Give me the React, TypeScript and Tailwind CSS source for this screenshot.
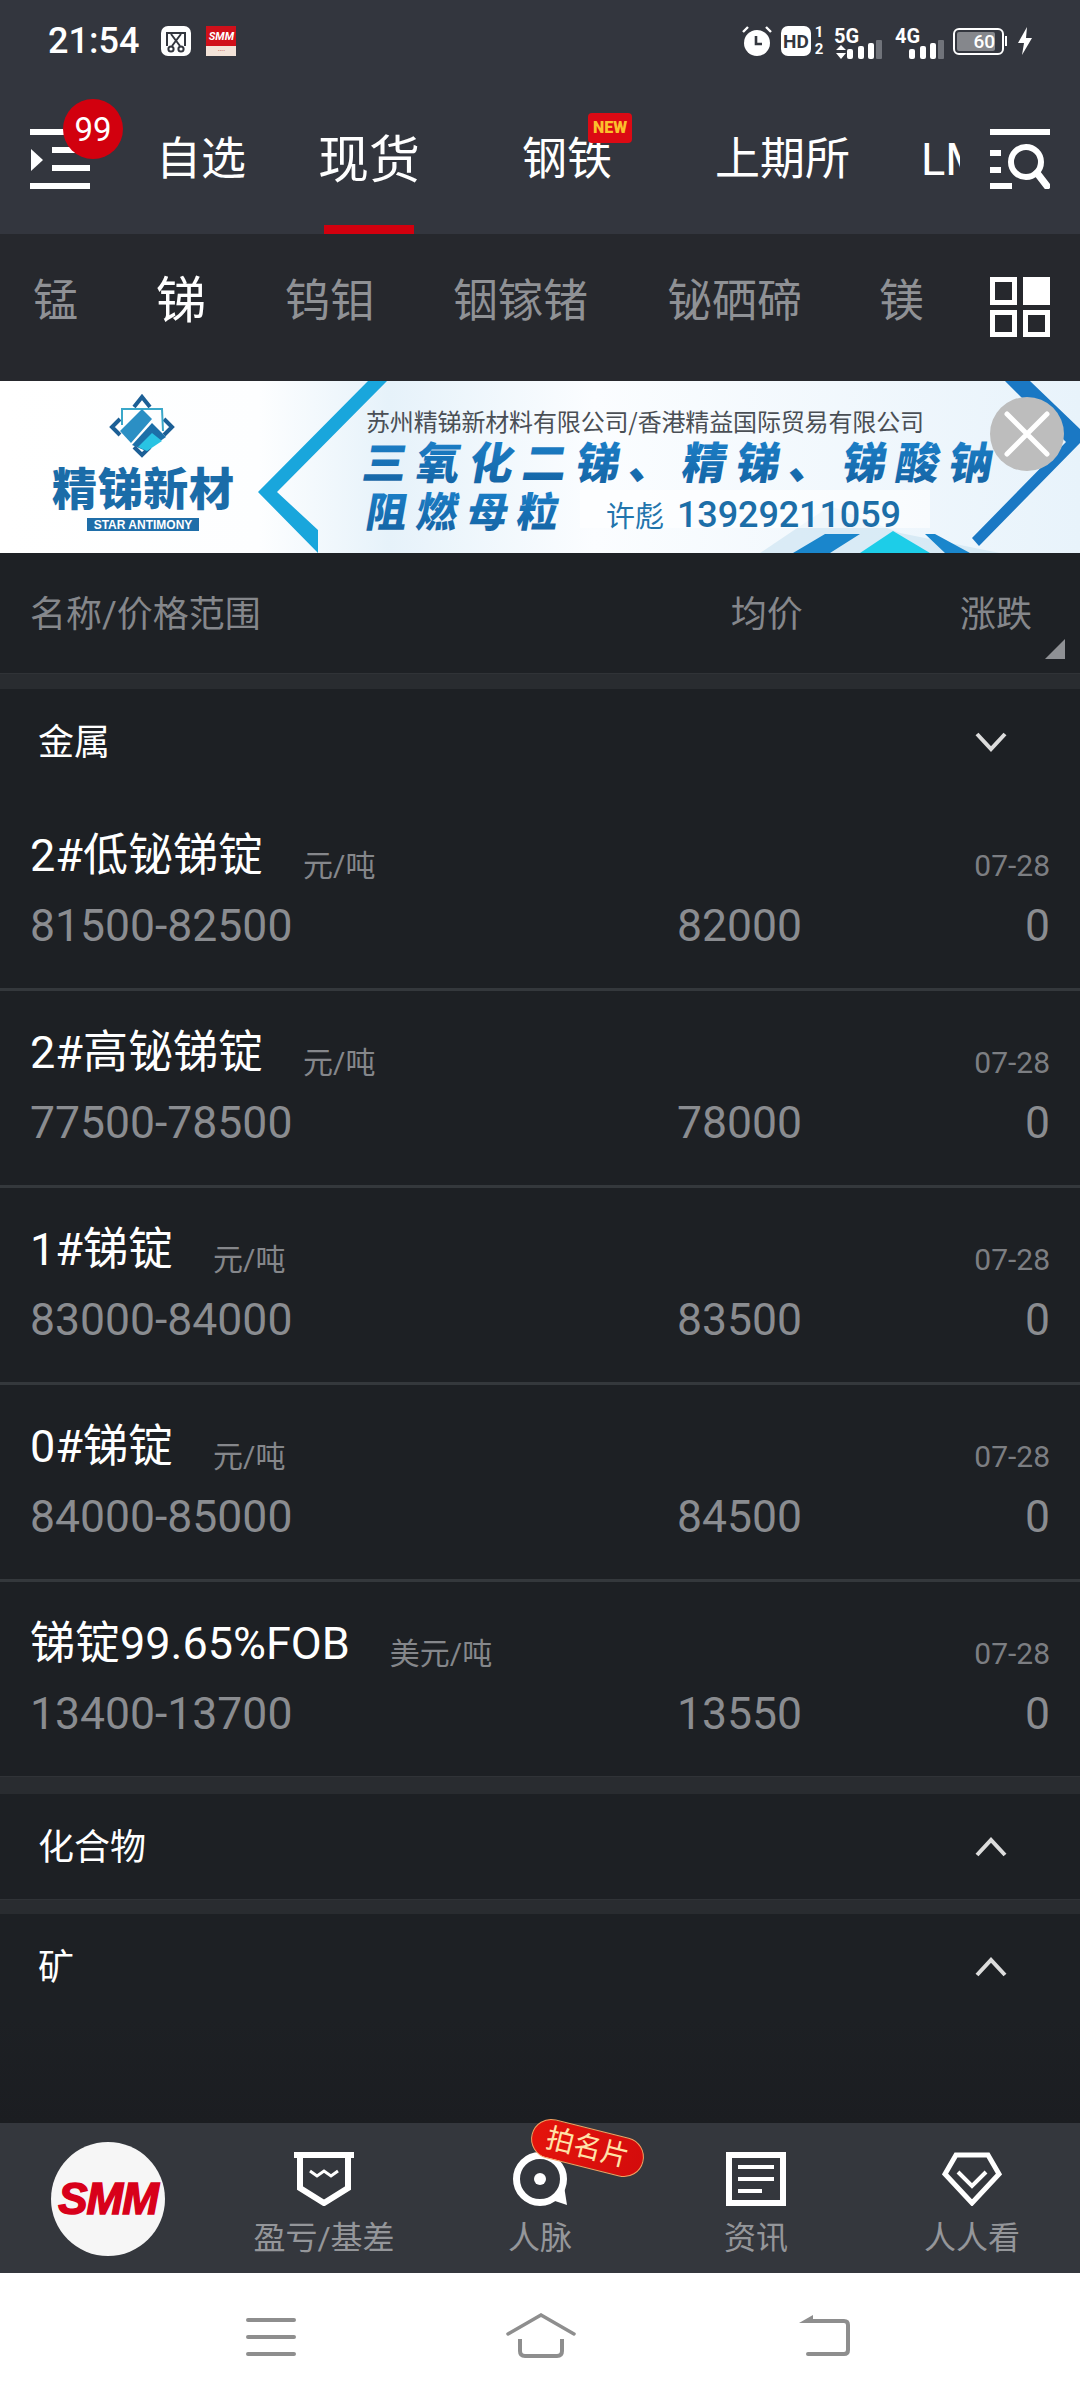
import { ReactNode } from "react";

interface Row {
  name: string;
  unit: string;
  range: string;
  avg: string;
}

const rows: Row[] = [
  { name: "2#低铋锑锭", unit: "元/吨", range: "81500-82500", avg: "82000" },
  { name: "2#高铋锑锭", unit: "元/吨", range: "77500-78500", avg: "78000" },
  { name: "1#锑锭", unit: "元/吨", range: "83000-84000", avg: "83500" },
  { name: "0#锑锭", unit: "元/吨", range: "84000-85000", avg: "84500" },
  { name: "锑锭99.65%FOB", unit: "美元/吨", range: "13400-13700", avg: "13550" },
];

const Signal = ({ label }: { label: string }) => (
  <svg width="50" height="38" viewBox="0 -6 50 38" className="block">
    {label === "5G" ? (
      <>
        <text x="1" y="15" fontSize="20" fontWeight="700" fill="#fff" fontFamily="Roboto">
          {label}
        </text>
        <path d="M3 22 L8 17 L13 22 Z M3 25 L13 25 L8 31 Z" fill="#fff" />
      </>
    ) : (
      <text x="0" y="15" fontSize="20" fontWeight="700" fill="#fff" fontFamily="Roboto">
        {label}
      </text>
    )}
    <rect x="14" y="21" width="6" height="10" rx="2" fill="#fff" />
    <rect x="25" y="18" width="6" height="13" rx="2" fill="#fff" />
    <rect x="35" y="15" width="6" height="16" rx="2" fill="#fff" />
    <rect x="43" y="12" width="6" height="19" rx="1" fill="#70737a" />
  </svg>
);

const StatusBar = () => (
  <div className="flex h-[82px] items-center pl-[48px] pr-[48px]">
    <span className="text-[36px] font-medium leading-none text-white">21:54</span>
    <svg width="30" height="30" viewBox="0 0 30 30" className="ml-[22px]">
      <rect width="30" height="30" rx="7" fill="#fff" />
      <path d="M6 20 V7 H24 V20" fill="none" stroke="#33363e" strokeWidth="2" />
      <path d="M10 8 L19 20 M20 8 L11 20" stroke="#33363e" strokeWidth="2" />
      <circle cx="10" cy="23" r="2.6" fill="none" stroke="#33363e" strokeWidth="2" />
      <circle cx="20" cy="23" r="2.6" fill="none" stroke="#33363e" strokeWidth="2" />
    </svg>
    <div className="ml-[15px] flex h-[30px] w-[30px] flex-col overflow-hidden">
      <div className="flex h-[20px] items-center justify-center bg-[#d0101a] text-[11px] font-bold italic leading-none text-white">
        SMM
      </div>
      <div className="flex h-[10px] items-center justify-center bg-[#f3e3d8] text-[7px] leading-none text-[#b04030]">
        ····
      </div>
    </div>
    <div className="ml-auto flex items-center">
      <svg width="30" height="32" viewBox="0 0 30 32">
        <circle cx="15" cy="18" r="13" fill="#fff" />
        <path d="M14 11 V19 H20" fill="none" stroke="#33363e" strokeWidth="2.6" />
        <path d="M1 7 L6 2 M29 7 L24 2" stroke="#fff" strokeWidth="2.4" />
      </svg>
      <div className="ml-[9px] flex h-[30px] w-[30px] items-center justify-center rounded-[7px] bg-white text-[19px] font-bold leading-none text-[#33363e]">
        HD
      </div>
      <div className="ml-[2px] flex h-[32px] w-[12px] flex-col items-center justify-between text-[15px] font-bold leading-[15px] text-white">
        <span>1</span>
        <span>2</span>
      </div>
      <div className="ml-[8px]">
        <Signal label="5G" />
      </div>
      <div className="ml-[12px]">
        <Signal label="4G" />
      </div>
      <div className="ml-[8px] flex h-[27px] w-[51px] items-center rounded-[6px] border-2 border-white p-[2px]">
        <div className="flex h-full w-[38px] items-center justify-end rounded-[2px] bg-[#85878c] text-[19px] font-medium leading-none text-white">
          60
        </div>
      </div>
      <div className="ml-[1px] h-[10px] w-[2px] bg-white" />
      <svg width="14" height="28" viewBox="0 0 14 28" className="ml-[11px]">
        <path d="M9 0 L0 16 H6 L4 28 L14 11 H8 Z" fill="#fff" />
      </svg>
    </div>
  </div>
);

const MainNav = () => (
  <div className="flex h-[152px] items-start">
    <div className="relative ml-[30px] mt-[47px] h-[60px] w-[60px] shrink-0">
      <svg width="60" height="60" viewBox="0 0 60 60" className="block">
        <rect x="0" y="0" width="60" height="6" fill="#fff" />
        <rect x="22" y="18" width="38" height="6" fill="#fff" />
        <rect x="22" y="36" width="38" height="6" fill="#fff" />
        <rect x="0" y="54" width="60" height="6" fill="#fff" />
        <path d="M1 20 L13 31 L1 42 Z" fill="#fff" />
      </svg>
      <div className="absolute left-[33px] top-[-30px] flex h-[60px] w-[60px] items-center justify-center rounded-full bg-[#d2000e] text-[33px] leading-none text-white">
        99
      </div>
    </div>
    <div className="ml-[66px] flex h-full w-[804px] overflow-hidden text-[45px] leading-none text-white">
      <span className="mt-[55px] shrink-0">自选</span>
      <div className="relative ml-[72px] h-full w-[102px] shrink-0">
        <span className="mt-[53px] block text-[51px] leading-none">现货</span>
        <div className="absolute bottom-0 left-[6px] h-[9px] w-[90px] bg-[#d2000e]" />
      </div>
      <div className="relative ml-[102px] shrink-0">
        <span className="mt-[55px] block">钢铁</span>
        <div className="absolute left-[66px] top-[31px] flex h-[30px] w-[44px] items-center justify-center rounded-[4px] bg-[#dc0a14] text-[16px] font-black leading-none text-[#fbc02d]">
          NEW
        </div>
      </div>
      <span className="ml-[103px] mt-[55px] shrink-0">上期所</span>
      <span className="ml-[71px] mt-[55px] shrink-0">LME</span>
    </div>
    <svg width="60" height="60" viewBox="0 0 60 60" className="mt-[47px] ml-[30px] shrink-0">
      <rect width="60" height="6" fill="#fff" />
      <rect y="21" width="11" height="6" fill="#fff" />
      <rect y="38" width="11" height="6" fill="#fff" />
      <rect y="54" width="22" height="6" fill="#fff" />
      <circle cx="36" cy="33" r="15" fill="none" stroke="#fff" strokeWidth="6" />
      <path d="M47 44 L57 57" stroke="#fff" strokeWidth="7" strokeLinecap="round" />
    </svg>
  </div>
);

const SubNav = () => (
  <div className="flex h-[147px] shrink-0 items-start bg-[#26282d] text-[45px] leading-none text-[#8f9195]">
    <span className="ml-[33px] mt-[45px]">锰</span>
    <span className="ml-[78px] mt-[42px] text-[50px] text-white">锑</span>
    <span className="ml-[79px] mt-[45px]">钨钼</span>
    <span className="ml-[78px] mt-[45px]">铟镓锗</span>
    <span className="ml-[79px] mt-[45px]">铋硒碲</span>
    <span className="ml-[77px] mt-[45px]">镁</span>
    <svg width="60" height="60" viewBox="0 0 60 60" className="ml-auto mr-[30px] mt-[43px]">
      <rect x="2.5" y="2.5" width="22" height="23" fill="none" stroke="#fff" strokeWidth="5" />
      <rect x="33" y="0" width="27" height="28" fill="#fff" />
      <rect x="2.5" y="35.5" width="22" height="22" fill="none" stroke="#fff" strokeWidth="5" />
      <rect x="35.5" y="35.5" width="22" height="22" fill="none" stroke="#fff" strokeWidth="5" />
    </svg>
  </div>
);

const Banner = () => (
  <svg width="1080" height="172" viewBox="0 0 1080 172" className="block shrink-0">
    <defs>
      <linearGradient id="bannerBg" x1="0" x2="1" y1="0" y2="0">
        <stop offset="0" stopColor="#ffffff" />
        <stop offset="0.24" stopColor="#fdfeff" />
        <stop offset="0.36" stopColor="#e6f2fa" />
        <stop offset="0.55" stopColor="#fbfdff" />
        <stop offset="1" stopColor="#e8f3fb" />
      </linearGradient>
      <linearGradient id="bannerText" x1="0" x2="0" y1="0" y2="1">
        <stop offset="0" stopColor="#1d86d0" />
        <stop offset="1" stopColor="#14609f" />
      </linearGradient>
    </defs>
    <rect width="1080" height="172" fill="url(#bannerBg)" />
    <path d="M760 172 L830 125 L900 152 L1000 172 Z" fill="#cfe6f2" opacity="0.7" />
    <path d="M580 109 H930 V147 H580 Z" fill="#ffffff" opacity="0.6" />

    {/* logo */}
    <path d="M134 26 L142 16 L150 26 M134 66 L142 74 L150 66" fill="none" stroke="#1c5f96" strokeWidth="4" />
    <path d="M120 38 L112 46 L120 54 M164 38 L172 46 L164 54" fill="none" stroke="#1c5f96" strokeWidth="4" />
    <path d="M122 44 V28 H162 L163 50" fill="none" stroke="#3aa7c9" strokeWidth="2" />
    <path d="M120 50 L142 28 L152 38 L131 62 Z" fill="#2b8fc4" />
    <path d="M132 64 L152 42 L166 56 L146 70 Z" fill="#1c6fa8" />
    <path d="M138 66 L152 52 L162 60 L147 70 Z" fill="#29c3e3" />
    <text x="52" y="125" fontSize="45" fontWeight="900" fill="#1b6ca8" fontFamily="'Noto Sans CJK SC'" textLength="182">
      精锑新材
    </text>
    <rect x="87" y="137" width="112" height="13" fill="#1f6ea9" />
    <text x="143" y="148" fontSize="12" fontWeight="700" fill="#fff" fontFamily="'Liberation Sans'" textAnchor="middle">
      STAR ANTIMONY
    </text>

    {/* chevrons */}
    <path d="M368 0 H387 L277 111 L318 149 V172 L258 111 Z" fill="#19a6dc" />
    <path d="M1005 0 H1030 L1080 48 V62 L979 165 L972 157 L1066 61 Z" fill="#1a78c4" />
    <path d="M793 172 L825 153 H860 L830 172 Z M925 153 H935 L970 172 H945 Z" fill="#1a86cc" />
    <path d="M860 172 L893 150 L930 172 Z" fill="#1dcde8" />

    <text x="366" y="50" fontSize="24" fill="#4a4f55" fontFamily="'Noto Sans CJK SC'" textLength="558">
      苏州精锑新材料有限公司/香港精益国际贸易有限公司
    </text>
    <g transform="skewX(-10)">
      <text x="378" y="98" fontSize="44" fontWeight="900" fill="url(#bannerText)" fontFamily="'Noto Sans CJK SC'" textLength="630">
        三氧化二锑、精锑、锑酸钠
      </text>
      <text x="390" y="146" fontSize="41" fontWeight="900" fill="url(#bannerText)" fontFamily="'Noto Sans CJK SC'" textLength="192">
        阻燃母粒
      </text>
    </g>
    <text x="606" y="146" fontSize="29" fill="#2275ad" fontFamily="'Noto Sans CJK SC'">
      许彪
    </text>
    <text x="677" y="146" fontSize="36" fontWeight="500" fill="#1c6ea8" fontFamily="Roboto" textLength="224">
      13929211059
    </text>

    {/* close button */}
    <circle cx="1027" cy="53" r="37" fill="#bdbdbd" />
    <path d="M1007 33 L1047 73 M1047 33 L1007 73" stroke="#fff" strokeWidth="5" strokeLinecap="round" />
  </svg>
);

const TableHeader = () => (
  <div className="relative flex h-[120px] shrink-0 items-center bg-[#1e2125] pt-[4px] text-[36px] leading-none text-[#85878b]">
    <span className="ml-[30px]">名称/价格范围</span>
    <span className="ml-[470px]">均价</span>
    <span className="ml-[157px]">涨跌</span>
    <div className="absolute left-[1045px] top-[86px] h-[20px] w-[20px] bg-[#8f9195] [clip-path:polygon(100%_0,100%_100%,0_100%)]" />
  </div>
);

const Bar = ({ h }: { h: string }) => <div className={`${h} shrink-0 border-t border-[#303337] bg-[#292c30]`} />;

const SectionTitle = ({ title, open, children }: { title: string; open?: boolean; children?: ReactNode }) => (
  <div className="flex h-[105px] shrink-0 items-center pl-[38px] pr-[73px] text-[36px] leading-none text-white">
    <span className="mt-[3px]">{title}</span>
    <svg width="32" height="20" viewBox="0 0 32 20" className="ml-auto">
      <path d={open ? "M2 2 L16 17 L30 2" : "M2 18 L16 3 L30 18"} fill="none" stroke="#dcdcdc" strokeWidth="4" />
    </svg>
    {children}
  </div>
);

const DataRow = ({ row, last }: { row: Row; last: boolean }) => (
  <div className={`shrink-0 px-[30px] pt-[36px] ${last ? "h-[194px]" : "h-[197px] border-b-[3px] border-[#34383c]"}`}>
    <div className="flex h-[50px] items-center">
      <span className="text-[45px] leading-none text-white">{row.name}</span>
      <span className="ml-[40px] mt-[22px] text-[30px] leading-none text-[#85878b]">{row.unit}</span>
      <span className="ml-auto mt-[22px] text-[30px] leading-none text-[#7c7e82]">07-28</span>
    </div>
    <div className="relative mt-[20px] flex h-[52px] items-center justify-between text-[44.5px] leading-none text-[#8a8c90]">
      <span>{row.range}</span>
      <span className="absolute right-[248px]">{row.avg}</span>
      <span>0</span>
    </div>
  </div>
);

const BottomNav = () => (
  <div className="relative grid h-[150px] shrink-0 grid-cols-5 bg-[#34373d] text-[32px] leading-none text-[#94969a]">
    <div className="flex items-start justify-center pt-[19px]">
      <div className="flex h-[114px] w-[114px] items-center justify-center overflow-hidden rounded-full bg-[#f6f6f6]">
        <span className="font-['Liberation_Sans'] text-[44px] font-bold italic leading-none tracking-[-1px] text-[#d8001a] [-webkit-text-stroke:1.5px_#d8001a]">
          SMM
        </span>
      </div>
    </div>
    <div className="flex flex-col items-center pt-[29px]">
      <svg width="60" height="54" viewBox="0 0 60 54" className="block">
        <rect width="60" height="6" fill="#fff" />
        <path d="M6 3 V36 L30 51 L54 36 V3" fill="none" stroke="#fff" strokeWidth="6" />
        <path d="M16 19 L23 24 L30 19 L37 24 L44 19" fill="none" stroke="#fff" strokeWidth="3" />
      </svg>
      <span className="mt-[16px]">盈亏/基差</span>
    </div>
    <div className="relative flex flex-col items-center pt-[29px]">
      <svg width="60" height="54" viewBox="0 0 60 54" className="block">
        <circle cx="30" cy="27" r="23.5" fill="none" stroke="#fff" strokeWidth="7" />
        <path d="M42 48 L57 53 L54 34 Z" fill="#fff" />
        <circle cx="30" cy="27" r="6" fill="#fff" />
      </svg>
      <span className="mt-[16px]">人脉</span>
      <div className="absolute left-[98px] top-[5px] flex h-[40px] w-[115px] rotate-[14deg] items-center justify-center rounded-[20px] border border-[#f4a060] bg-gradient-to-r from-[#e4140c] to-[#d40c0c] text-[28px] leading-none text-[#ffe2a8]">
        拍名片
      </div>
    </div>
    <div className="flex flex-col items-center pt-[29px]">
      <svg width="60" height="54" viewBox="0 0 60 54" className="block">
        <rect x="3" y="3" width="54" height="48" fill="none" stroke="#fff" strokeWidth="6" />
        <path d="M12 15 H48 M12 27 H48 M12 39 H36" stroke="#fff" strokeWidth="4" />
      </svg>
      <span className="mt-[16px]">资讯</span>
    </div>
    <div className="flex flex-col items-center pt-[29px]">
      <svg width="60" height="54" viewBox="0 0 60 54" className="block">
        <path d="M14 3 H46 L57 22 L30 51 L3 22 Z" fill="none" stroke="#fff" strokeWidth="5" />
        <path d="M16 20 L30 34 L44 20" fill="none" stroke="#fff" strokeWidth="4" />
      </svg>
      <span className="mt-[16px]">人人看</span>
    </div>
  </div>
);

const SystemNav = () => (
  <div className="flex h-[127px] shrink-0 items-start bg-white">
    <svg width="50" height="40" viewBox="0 0 50 40" className="ml-[246px] mt-[45px]">
      <path d="M2 2 H48 M2 19 H48 M2 36 H48" stroke="#8e8e8e" strokeWidth="4" strokeLinecap="round" />
    </svg>
    <svg width="70" height="46" viewBox="0 0 70 46" className="ml-[210px] mt-[40px]">
      <path d="M2 21 L35 2 L68 21" fill="none" stroke="#8e8e8e" strokeWidth="3.5" strokeLinecap="round" />
      <path d="M14 26 V38 Q14 43 19 43 H51 Q56 43 56 38 V26" fill="none" stroke="#8e8e8e" strokeWidth="4" />
    </svg>
    <svg width="52" height="46" viewBox="0 0 52 46" className="ml-[222px] mt-[41px]">
      <path d="M1 9 L15 1 V9 Z" fill="#8e8e8e" />
      <path d="M12 7 H46 Q50 7 50 11 V36 Q50 40 46 40 H10" fill="none" stroke="#8e8e8e" strokeWidth="4" strokeLinecap="round" />
    </svg>
  </div>
);

export default function App() {
  return (
    <div className="flex h-[2400px] w-[1080px] flex-col overflow-hidden bg-[#1d2024] font-[Roboto,'Noto_Sans_CJK_SC',sans-serif]">
      <div className="h-[234px] shrink-0 bg-[#33363e]">
        <StatusBar />
        <MainNav />
      </div>
      <SubNav />
      <Banner />
      <TableHeader />
      <Bar h="h-[16px]" />
      <SectionTitle title="金属" open />
      {rows.map((row, i) => (
        <DataRow key={row.name} row={row} last={i === rows.length - 1} />
      ))}
      <Bar h="h-[18px]" />
      <SectionTitle title="化合物" />
      <Bar h="h-[15px]" />
      <SectionTitle title="矿" />
      <div className="min-h-0 flex-1 bg-gradient-to-b from-[#1d2024] to-[#1b1d21]" />
      <BottomNav />
      <SystemNav />
    </div>
  );
}
